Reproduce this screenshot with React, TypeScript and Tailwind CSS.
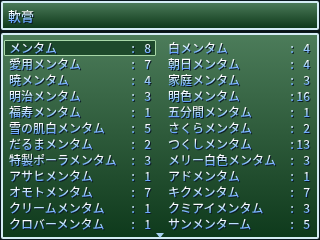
import React from "react";

const left: [string, number][] = [
  ["メンタム", 8],
  ["愛用メンタム", 7],
  ["暁メンタム", 4],
  ["明治メンタム", 3],
  ["福寿メンタム", 1],
  ["雪の肌白メンタム", 5],
  ["だるまメンタム", 2],
  ["特製ポーラメンタム", 3],
  ["アサヒメンタム", 1],
  ["オモトメンタム", 7],
  ["クリームメンタム", 1],
  ["クロバーメンタム", 1],
];
const right: [string, number][] = [
  ["白メンタム", 4],
  ["朝日メンタム", 4],
  ["家庭メンタム", 3],
  ["明色メンタム", 16],
  ["五分間メンタム", 1],
  ["さくらメンタム", 2],
  ["つくしメンタム", 13],
  ["メリー白色メンタム", 3],
  ["アドメンタム", 1],
  ["キクメンタム", 7],
  ["クミアイメンタム", 3],
  ["サンメンターム", 5],
];

const txt =
  "bg-gradient-to-b from-[#ffffff] from-25% via-[#b4dcff] via-50% to-[#68a4ff] to-85% bg-clip-text text-transparent drop-shadow-[1px_1px_0_#0c1c24]";

function Cell({ name, n, sel }: { name: string; n: number; sel?: boolean }) {
  return (
    <div
      className={`h-[16px] flex items-center pl-[4px] pr-[4px] ${
        sel ? "border border-[#a8d8a8] bg-[#1e4a2c] rounded-[1px]" : "border border-transparent"
      }`}
    >
      <span className={`flex-1 ${txt}`}>{name}</span>
      <span className={`w-[8px] text-center ${txt}`}>:</span>
      <span className={`w-[14px] text-right ${txt}`}>{n}</span>
    </div>
  );
}

export default function App() {
  return (
    <div
      className="w-[320px] h-[240px] bg-[#0a1410] flex flex-col gap-[1px] text-[12px] leading-[14px] font-medium"
      style={{ fontFamily: '"Noto Sans CJK JP", "DejaVu Sans", sans-serif' }}
    >
      <div className="h-[31px] border border-[#0a1820] rounded-[2px]">
        <div className="h-full border-2 border-[#d4ecf4] rounded-[2px] bg-gradient-to-b from-[#4a7a58] to-[#0e3a1c] flex items-center px-[5px]">
          <span className={`text-[13px] ${txt}`}>軟膏</span>
        </div>
      </div>
      <div className="flex-1 border border-[#0a1820] rounded-[2px]">
        <div className="relative h-full border-2 border-[#d4ecf4] rounded-[2px] bg-gradient-to-b from-[#4c7c5a] to-[#0e3a1c] pt-[5px] px-[1px]">
          <div className="grid grid-cols-[152px_152px] gap-x-[7px]">
            <div className="flex flex-col">
              {left.map(([a, b], i) => (
                <Cell key={a} name={a} n={b} sel={i === 0} />
              ))}
            </div>
            <div className="flex flex-col">
              {right.map(([a, b]) => (
                <Cell key={a} name={a} n={b} />
              ))}
            </div>
          </div>
          <div className="absolute left-1/2 -translate-x-1/2 bottom-[-1px] w-0 h-0 border-l-[4px] border-r-[4px] border-t-[5px] border-l-transparent border-r-transparent border-t-[#a8d0f0]" />
        </div>
      </div>
    </div>
  );
}
